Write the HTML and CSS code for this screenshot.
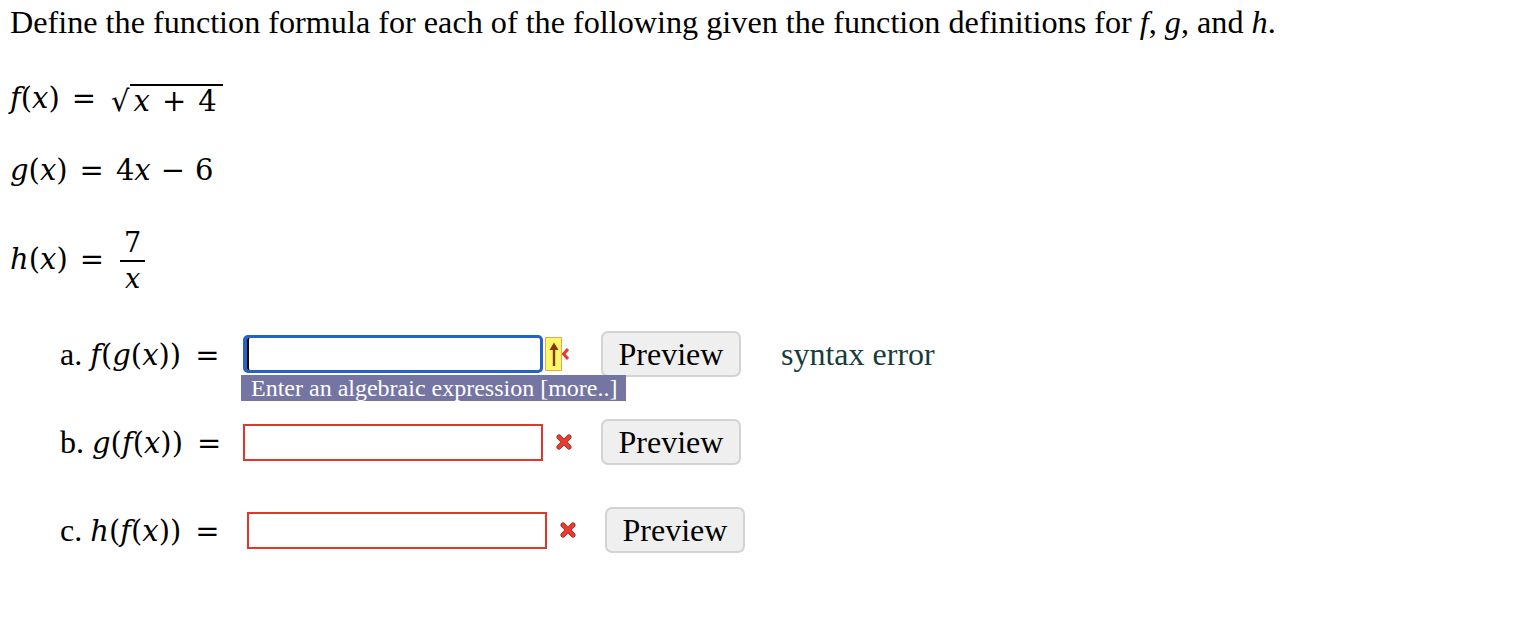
FILE: index.html
```html
<!DOCTYPE html>
<html lang="en">
<head>
<meta charset="utf-8">
<title>Function composition</title>
<link rel="stylesheet" href="styles.css">
</head>
<body>
<p class="intro">Define the function formula for each of the following given the function definitions for <i>f</i>, <i>g</i>, and <i>h</i>.</p>

<div class="def def-f"><span class="m"><i>f</i>(<i>x</i>)<span class="rel">=</span><span class="sqrt"><span class="rad">√</span><span class="under"><i>x</i><span class="bin">+</span>4</span></span></span></div>
<div class="def def-g"><span class="m"><i>g</i>(<i>x</i>)<span class="rel">=</span>4<i>x</i><span class="bin">−</span>6</span></div>
<div class="def def-h"><span class="m"><i>h</i>(<i>x</i>)<span class="rel">=</span><span class="frac"><span class="num">7</span><span class="den"><i>x</i></span></span></span></div>

<div class="parts">
  <div class="part">
    <span class="lbl">a. <span class="m"><i>f</i>(<i>g</i>(<i>x</i>))<span class="rel">=</span></span></span>
    <div class="field">
      <input class="ans focus" type="text" aria-label="answer a">
      <div class="tip">Enter an algebraic expression [more..]</div>
    </div>
    <span class="flag">
      <span class="warn"><svg width="10" height="26" viewBox="0 0 10 26"><path d="M5 25 V7" stroke="#8a3412" stroke-width="2.4" fill="none"/><path d="M0.5 9 L5 1.5 L9.5 9 Z" fill="#8a3412"/></svg></span><svg class="peek" width="7" height="12" viewBox="0 0 7 12"><path d="M6 1 L1.5 6 L6 11" stroke="#e8392c" stroke-width="3" fill="none"/></svg>
    </span>
    <button class="prev" type="button">Preview</button>
    <span class="msg">syntax error</span>
  </div>

  <div class="part">
    <span class="lbl">b. <span class="m"><i>g</i>(<i>f</i>(<i>x</i>))<span class="rel">=</span></span></span>
    <div class="field"><input class="ans bad" type="text" aria-label="answer b"></div>
    <span class="flag"><svg class="xmark" width="16" height="16" viewBox="0 0 16 16"><path d="M3 3 L13 13 M13 3 L3 13" stroke="#9b2a22" stroke-width="5" stroke-linecap="round"/><path d="M3 3 L13 13 M13 3 L3 13" stroke="#ec3b2e" stroke-width="3.6" stroke-linecap="round"/></svg></span>
    <button class="prev" type="button">Preview</button>
  </div>

  <div class="part part-c">
    <span class="lbl">c. <span class="m"><i>h</i>(<i>f</i>(<i>x</i>))<span class="rel">=</span></span></span>
    <div class="field"><input class="ans bad" type="text" aria-label="answer c"></div>
    <span class="flag"><svg class="xmark" width="16" height="16" viewBox="0 0 16 16"><path d="M3 3 L13 13 M13 3 L3 13" stroke="#9b2a22" stroke-width="5" stroke-linecap="round"/><path d="M3 3 L13 13 M13 3 L3 13" stroke="#ec3b2e" stroke-width="3.6" stroke-linecap="round"/></svg></span>
    <button class="prev" type="button">Preview</button>
  </div>
</div>
</body>
</html>
```

FILE: styles.css
```css
html, body {
  background: #fff;
}
body {
  margin: 8px;
  font-family: "Liberation Serif", "Times New Roman", serif;
  font-size: 32px;
  color: #000;
}
.intro {
  margin: 0 0 0 2px;
  line-height: 28px;
  font-size: 32.2px;
}
.m {
  font-family: "DejaVu Serif", serif;
  font-size: 29px;
  white-space: nowrap;
}
.m i {
  font-style: italic;
}
.rel {
  padding: 0 12px;
}
.lbl .rel {
  padding: 0 0 0 14px;
}
.bin {
  padding: 0 10px;
}
.def {
  display: flex;
  align-items: center;
  padding-left: 2px;
}
.def-f {
  height: 40px;
  margin-top: 43px;
}
.def-g {
  height: 40px;
  margin-top: 31px;
}
.def-h {
  height: 72px;
  margin-top: 35px;
}
.sqrt {
  display: inline-flex;
  align-items: flex-start;
  margin-left: 3px;
}
.rad {
  line-height: 1;
  transform: translateY(3px);
}
.under {
  border-top: 2px solid #000;
  padding: 0 6px 0 4px;
  line-height: 1.1;
}
.under .bin {
  padding: 0 12px;
}
.frac {
  display: inline-flex;
  flex-direction: column;
  align-items: center;
  vertical-align: middle;
  margin: 0 4px;
  line-height: 34px;
  font-size: 27px;
}
.num {
  padding: 0 4px;
}
.den {
  border-top: 2px solid #000;
  padding: 0 4px;
  align-self: stretch;
  text-align: center;
}
.parts {
  margin-top: 34px;
  display: flex;
  flex-direction: column;
  gap: 42px;
}
.part {
  display: flex;
  align-items: center;
  height: 46px;
  padding-left: 52px;
}
.lbl {
  width: 183px;
  font-size: 32px;
  white-space: nowrap;
}
.part-c .lbl {
  width: 187px;
}
.field {
  position: relative;
  display: flex;
}
.ans {
  box-sizing: border-box;
  width: 300px;
  height: 37px;
  margin: 0;
  font: inherit;
  background: #fff;
  outline: none;
}
.ans.bad {
  border: 2px solid #e2362b;
  border-radius: 0;
}
.ans.focus {
  height: 38px;
  border: 3px solid #2463c4;
  border-radius: 5px;
  border-left-width: 4px;
  box-shadow: inset 2px 0 0 #000;
}
.tip {
  position: absolute;
  left: -2px;
  top: 40px;
  width: 385px;
  box-sizing: border-box;
  height: 26px;
  padding-left: 10px;
  background: #7575a3;
  color: #fff;
  font-size: 24px;
  line-height: 26px;
  white-space: nowrap;
}
.flag {
  width: 58px;
  display: flex;
  align-items: center;
}
.warn {
  box-sizing: border-box;
  width: 17px;
  height: 34px;
  margin-left: 2px;
  background: #fbf96a;
  border: 1px solid #f0a54a;
  display: flex;
  align-items: center;
  justify-content: center;
}
.peek {
  margin-left: 0;
}
.xmark {
  margin-left: 13px;
}
.prev {
  box-sizing: border-box;
  width: 140px;
  height: 46px;
  margin: 0;
  padding: 0;
  background: #efefef;
  border: 2px solid #d3d3d3;
  border-radius: 7px;
  font-family: "Liberation Serif", serif;
  font-size: 32px;
  color: #000;
}
.msg {
  margin-left: 40px;
  color: #183c3c;
}
```
